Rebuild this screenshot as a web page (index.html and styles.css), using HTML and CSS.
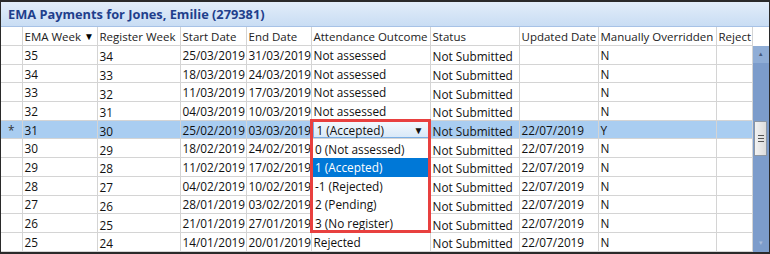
FILE: index.html
```html
<!DOCTYPE html>
<html lang="en">
    <head>
        <meta charset="UTF-8" />
        <title>EMA Payments</title>
        <link rel="stylesheet" href="styles.css">
    </head>
    <body>
        <div class="window">
            <div class="title">EMA Payments for Jones, Emilie (279381)</div>
            <div class="grid">
                <table class="data">
                    <colgroup>
                        <col class="c-sel"><col class="c-week"><col class="c-reg"><col class="c-start"><col class="c-end">
                        <col class="c-att"><col class="c-status"><col class="c-upd"><col class="c-man"><col class="c-rej">
                    </colgroup>
                    <thead>
                        <tr>
                            <th></th>
                            <th>EMA Week <span class="sort">&#9660;</span></th>
                            <th>Register Week</th>
                            <th>Start Date</th>
                            <th>End Date</th>
                            <th>Attendance Outcome</th>
                            <th>Status</th>
                            <th>Updated Date</th>
                            <th>Manually Overridden</th>
                            <th>Reject</th>
                        </tr>
                    </thead>
                    <tbody>
                        <tr><td></td><td>35</td><td class="low">34</td><td>25/03/2019</td><td>31/03/2019</td><td>Not assessed</td><td class="low">Not Submitted</td><td></td><td>N</td><td></td></tr>
                        <tr><td></td><td>34</td><td class="low">33</td><td>18/03/2019</td><td>24/03/2019</td><td>Not assessed</td><td class="low">Not Submitted</td><td></td><td>N</td><td></td></tr>
                        <tr><td></td><td>33</td><td class="low">32</td><td>11/03/2019</td><td>17/03/2019</td><td>Not assessed</td><td class="low">Not Submitted</td><td></td><td>N</td><td></td></tr>
                        <tr><td></td><td>32</td><td class="low">31</td><td>04/03/2019</td><td>10/03/2019</td><td>Not assessed</td><td class="low">Not Submitted</td><td></td><td>N</td><td></td></tr>
                        <tr class="selected"><td class="star">*</td><td>31</td><td class="low">30</td><td>25/02/2019</td><td>03/03/2019</td><td class="combo-cell"><div class="combo"><span>1 (Accepted)</span><span class="arrow">&#9660;</span></div></td><td class="low">Not Submitted</td><td>22/07/2019</td><td>Y</td><td></td></tr>
                        <tr><td></td><td>30</td><td class="low">29</td><td>18/02/2019</td><td>24/02/2019</td><td></td><td class="low">Not Submitted</td><td>22/07/2019</td><td>N</td><td></td></tr>
                        <tr><td></td><td>29</td><td class="low">28</td><td>11/02/2019</td><td>17/02/2019</td><td></td><td class="low">Not Submitted</td><td>22/07/2019</td><td>N</td><td></td></tr>
                        <tr><td></td><td>28</td><td class="low">27</td><td>04/02/2019</td><td>10/02/2019</td><td></td><td class="low">Not Submitted</td><td>22/07/2019</td><td>N</td><td></td></tr>
                        <tr><td></td><td>27</td><td class="low">26</td><td>28/01/2019</td><td>03/02/2019</td><td></td><td class="low">Not Submitted</td><td>22/07/2019</td><td>N</td><td></td></tr>
                        <tr><td></td><td>26</td><td class="low">25</td><td>21/01/2019</td><td>27/01/2019</td><td></td><td class="low">Not Submitted</td><td>22/07/2019</td><td>N</td><td></td></tr>
                        <tr><td></td><td>25</td><td class="low">24</td><td>14/01/2019</td><td>20/01/2019</td><td>Rejected</td><td class="low">Not Submitted</td><td>22/07/2019</td><td>N</td><td></td></tr>
                    </tbody>
                </table>
                <div class="scroll">
                    <div class="scroll-head"></div>
                    <div class="track">
                        <div class="btn up">&#9650;</div>
                        <div class="thumb"><span></span><span></span><span></span></div>
                        <div class="btn down">&#9660;</div>
                    </div>
                </div>

                <!-- open dropdown of the attendance combo, with the red callout -->
                <ul class="dropdown">
                    <li>0 (Not assessed)</li>
                    <li class="active">1 (Accepted)</li>
                    <li>-1 (Rejected)</li>
                    <li>2 (Pending)</li>
                    <li>3 (No register)</li>
                </ul>
                <div class="callout"></div>
            </div>
        </div>
    </body>
</html>
```

FILE: styles.css
```css
body {
    margin: 0;
    padding: 0;
    font-family: "Open Sans", "Noto Sans", sans-serif;
    background-color: #fff;
}
.window {
    width: 770px;
    height: 254px;
    box-sizing: border-box;
    border: 1px solid #2a2a2a;
    border-top-width: 2px;
    border-bottom-width: 2px;
    overflow: hidden;
}
.title {
    height: 24px;
    line-height: 25px;
    padding-left: 7px;
    font-size: 12.8px;
    font-weight: bold;
    color: #1f3f8c;
    background: linear-gradient(#e2edf9, #c9ddf4);
    border-bottom: 1px solid #a7c2e6;
}
.grid {
    position: relative;
    display: flex;
}
.data {
    border-collapse: collapse;
    table-layout: fixed;
    width: 751px;
    font-size: 11.8px;
    color: #111;
}
.c-sel { width: 21px; }
.c-week { width: 75px; }
.c-reg { width: 83px; }
.c-start { width: 66px; }
.c-end { width: 65px; }
.c-att { width: 119px; }
.c-status { width: 89px; }
.c-upd { width: 79px; }
.c-man { width: 118px; }
.c-rej { width: 36px; }
th,
td {
    border: 1px solid #d4d4d4;
    padding: 0 2px;
    white-space: nowrap;
    overflow: hidden;
    text-align: left;
}
th {
    height: 18px;
    font-size: 11.5px;
    font-weight: normal;
    color: #222;
    background-color: #fff;
    border-top: none;
}
th:first-child,
td:first-child {
    border-left: none;
}
td {
    height: 17.7px;
    line-height: 16px;
}
td.low {
    height: 14.7px;
    padding-top: 3px;
    line-height: 14px;
}
.sort {
    font-size: 10px;
    color: #000;
    vertical-align: 1px;
}
.selected td {
    background-color: #a9cdf1;
}
.star {
    text-align: center;
    color: #333;
}
.combo-cell {
    padding: 0 1px;
}
.combo {
    display: flex;
    justify-content: space-between;
    align-items: center;
    height: 15px;
    padding: 0 4px 0 3px;
    border: 1px solid #7aaee4;
    background: linear-gradient(#f3f8fd, #d9e9f8);
}
.arrow {
    font-size: 10px;
    color: #111;
}
.scroll {
    width: 17px;
    display: flex;
    flex-direction: column;
}
.scroll-head {
    height: 19px;
    background-color: #fff;
}
.track {
    flex: 1;
    background-color: #7c9ccb;
    display: flex;
    flex-direction: column;
    align-items: center;
}
.btn {
    height: 17px;
    width: 100%;
    text-align: center;
    font-size: 6px;
    line-height: 17px;
}
.up {
    background-color: #8fadd6;
    color: #46597a;
}
.down {
    margin-top: auto;
    color: #a8bddd;
}
.thumb {
    margin-top: 58px;
    width: 13px;
    height: 35px;
    box-sizing: border-box;
    border: 1px solid #8c96a3;
    background: linear-gradient(90deg, #f2f2f2, #dcdcdc);
    display: flex;
    flex-direction: column;
    justify-content: center;
    align-items: center;
    gap: 2px;
}
.thumb span {
    width: 6px;
    height: 1px;
    background-color: #555;
}
.dropdown {
    position: absolute;
    left: 311px;
    top: 113px;
    width: 116px;
    margin: 0;
    padding: 0;
    list-style: none;
    background-color: #fff;
    font-size: 11.8px;
    color: #111;
}
.dropdown li {
    height: 18.4px;
    line-height: 18px;
    padding-left: 3px;
}
.dropdown li.active {
    background-color: #0078d7;
    color: #fff;
}
.callout {
    position: absolute;
    left: 309px;
    top: 92px;
    width: 115px;
    height: 108px;
    border: 3px solid #e8403f;
}
```
